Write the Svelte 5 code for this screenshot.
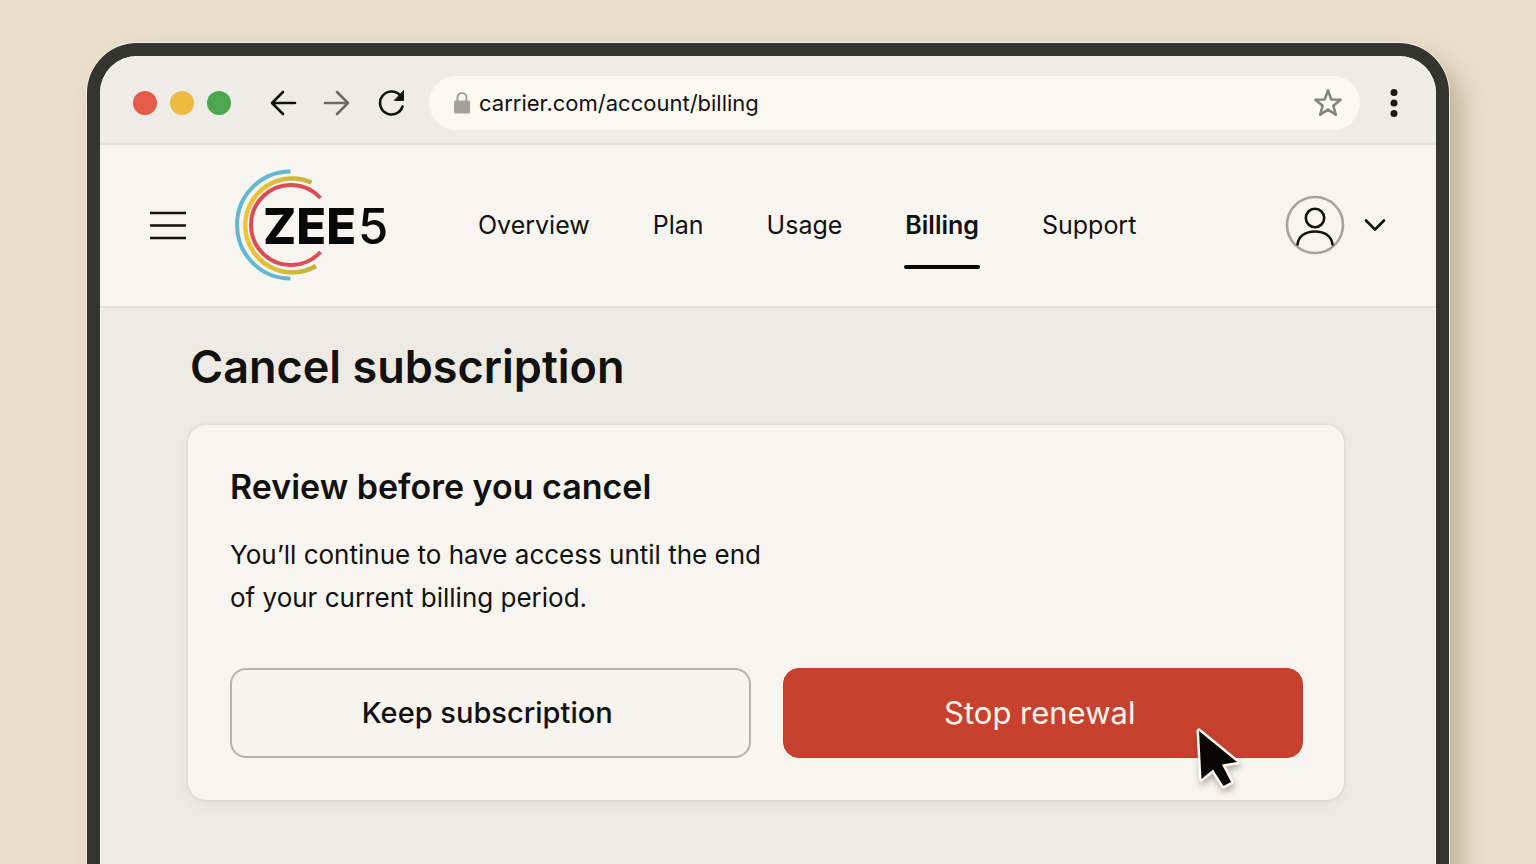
<script>
  const links = ['Overview', 'Plan', 'Usage', 'Billing', 'Support'];
  let active = $state('Billing');
  let url = $state('carrier.com/account/billing');
</script>

<div class="desk">
  <div class="window">
    <header class="chrome">
      <div class="lights" aria-hidden="true">
        <span class="red"></span><span class="amber"></span><span class="green"></span>
      </div>
      <div class="history">
        <button class="icon" aria-label="Back">
          <svg width="28" height="28" viewBox="0 0 28 28"><path d="M26 14H3M14 3L3 14l11 11" /></svg>
        </button>
        <button class="icon forward" aria-label="Forward">
          <svg width="28" height="28" viewBox="0 0 28 28"><path d="M2 14h23M14 3l11 11-11 11" /></svg>
        </button>
        <button class="icon" aria-label="Reload">
          <svg width="28" height="28" viewBox="0 0 28 28">
            <path d="M25.500 17.500A11.500 11.500 0 1 1 23 6.200" />
            <path class="solid" d="M26.500 2v9.400h-8.800z" />
          </svg>
        </button>
      </div>
      <div class="address">
        <svg width="18" height="24" viewBox="0 0 18 24" aria-hidden="true">
          <path d="M4.500 11V6.500a4.500 4.500 0 0 1 9 0V11" fill="none" stroke="#a3a19d" stroke-width="2" />
          <rect x="1" y="9.500" width="16" height="13" rx="1.500" fill="#a3a19d" />
        </svg>
        <input aria-label="Address" bind:value={url} spellcheck="false" />
        <button class="icon star" aria-label="Bookmark">
          <svg width="30" height="30" viewBox="0 0 30 30">
            <path d="M15 2.500l3.300 8.900 9.400.4-7.400 5.900 2.600 9.100L15 21.600l-7.900 5.200 2.600-9.100-7.400-5.900 9.400-.4z" />
          </svg>
        </button>
      </div>
      <button class="icon menu" aria-label="Browser menu">
        <svg width="10" height="30" viewBox="0 0 10 30">
          <circle cx="5" cy="4.500" r="3.500" /><circle cx="5" cy="15" r="3.500" /><circle cx="5" cy="25.500" r="3.500" />
        </svg>
      </button>
    </header>

    <div class="sitebar">
      <button class="icon bars" aria-label="Menu">
        <svg width="38" height="32" viewBox="0 0 38 32"><path d="M1 4h36M1 16.500h36M1 29h36" /></svg>
      </button>
      <a class="logo" href="#home" aria-label="ZEE5">
        <svg width="156" height="120" viewBox="0 0 156 120">
          <defs>
            <linearGradient id="gold" x1="0" x2="1" y1="0" y2="0">
              <stop offset="0" stop-color="#f0c535" />
              <stop offset="1" stop-color="#bdb53c" />
            </linearGradient>
          </defs>
          <g fill="none">
            <path d="M55.500 6.500a53.500 53.500 0 0 0 0 107" stroke="#62b7d3" stroke-width="4" />
            <path d="M76.500 17.500A47 47 0 1 0 81 101" stroke="url(#gold)" stroke-width="4.500" />
            <path d="M85.500 33A40 40 0 1 0 85.500 87" stroke="#dc4c57" stroke-width="4" />
          </g>
          <text x="28" y="79" font-weight="800">ZEE</text>
          <text x="123" y="79" font-weight="500">5</text>
        </svg>
      </a>
      <nav>
        {#each links as link}
          <a
            href="#{link.toLowerCase()}"
            class:active={active === link}
            aria-current={active === link ? 'page' : undefined}
            onclick={() => (active = link)}>{link}</a>
        {/each}
      </nav>
      <button class="icon account" aria-label="Account">
        <svg width="60" height="60" viewBox="0 0 60 60">
          <circle class="ring" cx="30" cy="30" r="28" />
          <circle cx="30" cy="23" r="9.200" />
          <path d="M12.500 49.500c1-8.500 8-13 17.500-13s16.500 4.500 17.500 13" />
        </svg>
        <svg width="22" height="16" viewBox="0 0 22 16"><path d="M2 3.500l9 9 9-9" /></svg>
      </button>
    </div>

    <main>
      <h1>Cancel subscription</h1>
      <section class="card">
        <h2>Review before you cancel</h2>
        <p>You’ll continue to have access until the end<br />of your current billing period.</p>
        <div class="actions">
          <button class="keep">Keep subscription</button>
          <div class="stopwrap">
            <button class="stop">Stop renewal</button>
            <svg class="cursor" width="48" height="66" viewBox="0 0 48 66" aria-hidden="true">
              <path d="M6 6l2.500 48L20 44.500 30.500 61l7.500-4-9-17.500L44 37z" />
            </svg>
          </div>
        </div>
      </section>
    </main>
  </div>
</div>

<style>
  :global(body) {
    margin: 0;
  }
  .desk {
    box-sizing: border-box;
    height: 100vh;
    padding: 43px 87px 0;
    display: flex;
    overflow: hidden;
    background: #eadfcd;
    font-family: Inter, 'Liberation Sans', sans-serif;
    color: #11110f;
  }
  .window {
    flex: 1;
    min-width: 0;
    display: flex;
    flex-direction: column;
    overflow: hidden;
    margin-bottom: -8px;
    border: 13px solid #343530;
    border-bottom: 0;
    border-radius: 50px 50px 0 0;
    background: #edeae4;
    box-shadow:
      inset 0 0 0 1px #fbfaf6,
      0 0 0 1px #f5eee2,
      12px 14px 24px rgb(112 88 55 / 35%);
  }
  button,
  input {
    font: inherit;
    color: inherit;
  }
  .icon {
    display: flex;
    padding: 0;
    border: 0;
    background: none;
    cursor: pointer;
  }
  .icon path,
  .icon circle {
    fill: none;
    stroke: #11110f;
    stroke-width: 2.6;
    stroke-linecap: round;
    stroke-linejoin: round;
  }
  .chrome {
    display: flex;
    align-items: center;
    height: 89px;
    padding: 7px 37px 0 33px;
    border-bottom: 2px solid #e4e1db;
    background: #eeece6;
    box-sizing: border-box;
  }
  .lights {
    display: flex;
    gap: 13px;
  }
  .lights span {
    width: 24px;
    height: 24px;
    border-radius: 50%;
  }
  .red {
    background: #e35a47;
  }
  .amber {
    background: #edbb40;
  }
  .green {
    background: #4ba64f;
  }
  .history {
    display: flex;
    gap: 26px;
    margin: 0 24px 0 38px;
  }
  .forward path {
    stroke: #6d6b69;
  }
  .icon .solid {
    fill: #11110f;
    stroke-width: 1;
  }
  .address {
    flex: 1;
    min-width: 0;
    display: flex;
    align-items: center;
    height: 54px;
    padding: 0 17px 0 24px;
    border-radius: 27px;
    background: #fbf8f2;
  }
  .address input {
    flex: 1;
    min-width: 0;
    margin: 0 8px;
    padding: 0;
    border: 0;
    outline: 0;
    background: none;
    font-size: 22px;
    line-height: 32px;
  }
  .star path {
    stroke: #858381;
    stroke-width: 2.5;
  }
  .menu {
    margin-left: 29px;
  }
  .icon.menu circle {
    fill: #1b1a18;
    stroke: none;
  }
  .sitebar {
    display: flex;
    align-items: center;
    height: 163px;
    padding: 0 50px 2px 49px;
    box-sizing: border-box;
    border-bottom: 2px solid #e2dfda;
    background: #f8f5f0;
  }
  .bars path {
    stroke-linecap: butt;
  }
  .logo {
    display: flex;
    margin-left: 48px;
  }
  .logo text {
    font-family: Inter, sans-serif;
    font-size: 49px;
    fill: #080807;
  }
  nav {
    display: flex;
    gap: 61px;
    margin-left: 86px;
  }
  nav a {
    padding: 28px 1px;
    border-bottom: 4px solid transparent;
    border-top: 4px solid transparent;
    color: inherit;
    font-size: 25px;
    line-height: 32px;
    text-decoration: none;
  }
  nav .active {
    font-weight: 600;
    position: relative;
  }
  nav .active::after {
    content: '';
    position: absolute;
    inset: auto 0 0;
    height: 4px;
    border-radius: 2px;
    background: #080807;
  }
  .account {
    align-items: center;
    gap: 19px;
    margin-left: auto;
  }
  .account .ring {
    stroke: #a5a3a0;
  }
  main {
    padding: 30px 92px 0 88px;
  }
  h1,
  h2,
  p {
    margin: 0;
  }
  h1 {
    margin-left: 2px;
    font-size: 45px;
    font-weight: 600;
    line-height: 58px;
  }
  .card {
    margin-top: 29px;
    padding: 40px 41px 42px 42px;
    border-radius: 18px;
    background: #f8f5f0;
    box-shadow:
      0 0 3px rgb(80 70 50 / 16%),
      0 4px 12px rgb(80 70 50 / 5%);
  }
  h2 {
    font-size: 34px;
    font-weight: 600;
    line-height: 44px;
  }
  p {
    margin-top: 24px;
    font-size: 26px;
    line-height: 43px;
  }
  .actions {
    display: grid;
    grid-template-columns: 1fr 1fr;
    gap: 32px;
    margin-top: 49px;
  }
  .actions button {
    width: 100%;
    height: 90px;
    padding: 0 12px 2px 6px;
    border-radius: 16px;
    cursor: pointer;
  }
  .actions .keep {
    border: 2px solid #b5b3b0;
    background: #f7f3ef;
    font-size: 29px;
    font-weight: 500;
  }
  .stopwrap {
    position: relative;
  }
  .actions .stop {
    border: 1px solid #c13b2b;
    background: #c8412f;
    color: #fff5ee;
    font-size: 31px;
  }
  .cursor {
    position: absolute;
    right: 62px;
    bottom: -33px;
    overflow: visible;
    filter: drop-shadow(1px 4px 3px rgb(40 20 10 / 30%));
    pointer-events: none;
  }
  .cursor path {
    fill: #080706;
    stroke: #fffaf4;
    stroke-width: 5;
    stroke-linejoin: round;
    paint-order: stroke;
  }
</style>
